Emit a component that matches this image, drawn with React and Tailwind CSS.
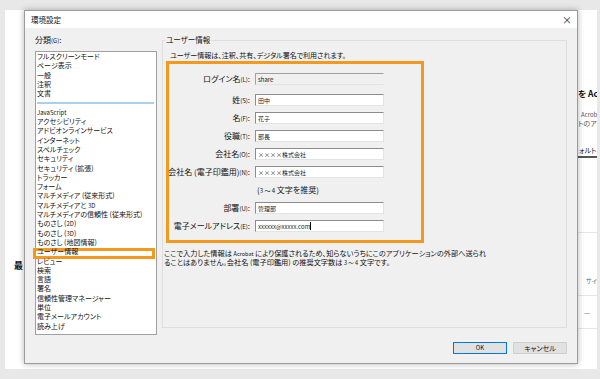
import React from "react";

const jp = "font-['Noto_Sans_CJK_JP','Noto_Sans',sans-serif] [font-feature-settings:'palt']";

const topCategories = ["フルスクリーンモード", "ページ表示", "一般", "注釈", "文書"];
const categories = [
  "JavaScript",
  "アクセシビリティ",
  "アドビオンラインサービス",
  "インターネット",
  "スペルチェック",
  "セキュリティ",
  "セキュリティ (拡張)",
  "トラッカー",
  "フォーム",
  "マルチメディア (従来形式)",
  "マルチメディアと 3D",
  "マルチメディアの信頼性 (従来形式)",
  "ものさし (2D)",
  "ものさし (3D)",
  "ものさし (地図情報)",
  "ユーザー情報",
  "レビュー",
  "検索",
  "言語",
  "署名",
  "信頼性管理マネージャー",
  "単位",
  "電子メールアカウント",
  "読み上げ",
];

const fields = [
  { label: "ログイン名", key: "L", value: "share", readOnly: true },
  { label: "姓", key: "S", value: "田中" },
  { label: "名", key: "F", value: "花子" },
  { label: "役職", key: "T", value: "部長" },
  { label: "会社名", key: "O", value: "××××株式会社" },
  { label: "会社名 (電子印鑑用)", key: "N", value: "××××株式会社", hint: true },
  { label: "部署", key: "U", value: "管理部" },
  { label: "電子メールアドレス", key: "E", value: "xxxxxx@xxxxx.com", caret: true },
];

// Latin runs render smaller than the Japanese text, like Meiryo UI does
function Latin({ text }) {
  return text.split(/([A-Za-z0-9@.]+)/).map((part, i) =>
    /^[A-Za-z0-9@.]+$/.test(part) ? (
      <span key={i} className="text-[6px]">
        {part}
      </span>
    ) : (
      part
    )
  );
}

function Field({ value, readOnly, caret }) {
  return (
    <div
      className={`w-[129px] h-[12px] border flex items-center pl-[2px] text-[6px] text-[#222] ${
        readOnly
          ? "border-t-[#a0a0a0] border-l-[#a0a0a0] border-r-transparent border-b-[#e2e2e2]"
          : "bg-white border-t-[#8c8c8c] border-l-[#8c8c8c] border-r-[#e3e3e3] border-b-[#e3e3e3]"
      }`}
    >
      <span>{value}</span>
      {caret && <span className="w-px h-[8px] bg-black" />}
    </div>
  );
}

function FormRow({ field }) {
  return (
    <div className="flex items-center h-[18px]">
      <div className="w-[81px] flex justify-end whitespace-nowrap text-[8px]">
        {field.label}
        <span className="text-[6px] self-center">({field.key})</span>:
      </div>
      <div className="ml-[5px]">
        <Field value={field.value} readOnly={field.readOnly} caret={field.caret} />
      </div>
    </div>
  );
}

export default function App() {
  return (
    <div className={`relative w-[600px] h-[379px] bg-[#e8e8e8] overflow-hidden text-[#111] ${jp}`}>
      {/* application window behind the dialog */}
      <div className="flex h-full pt-[10px] pb-[10px] pl-[5px] pr-[3px]">
        <div className="flex-1 bg-white flex">
          <div className="w-[19px] pt-[250px] pl-[9px] text-[9px] font-bold leading-[12px]">最</div>
          <div className="flex-1" />
          <div className="w-[19px] overflow-hidden flex flex-col pt-[77px] whitespace-nowrap">
            <div className="h-[12px] leading-[12px] text-[8.5px] font-bold">を Ac</div>
            <div className="mt-[12px] h-[8px] leading-[8px] text-[6px] text-[#555] pl-[3px]">Acrob</div>
            <div className="h-[8px] leading-[8px] text-[7px] text-[#555]">トのア</div>
            <div className="mt-[17px] h-[14px] border-b-2 border-[#555] flex items-center text-[7px] pl-[1px]">
              ォルト
            </div>
            <div className="h-[75px] border-b border-[#e6e6e6]" />
            <div className="h-[63px] pt-[44px] leading-[8px] text-[6px] text-[#666] pl-[8px] border-b border-[#e6e6e6]">
              サイ
            </div>
            <div className="h-[33px] pt-[12px] leading-[8px] text-[7px] text-[#666] pl-[6px] border-b border-[#e6e6e6]">
              —
            </div>
          </div>
        </div>
      </div>

      {/* preferences dialog */}
      <div className="absolute left-[24px] top-[10px] w-[554px] h-[354px] flex flex-col bg-[#f0f0f0] border border-[#9b9b9b] shadow-[0_0_6px_rgba(0,0,0,0.3)]">
        <div className="h-[17px] shrink-0 bg-white flex items-center justify-between pl-[6px] pr-[5px]">
          <span className="text-[7.5px]">環境設定</span>
          <span className="text-[10px] leading-none text-[#333]">×</span>
        </div>

        <div className="flex-1 flex flex-col pl-[10px] pr-[10px] pt-[6px]">
          <div className="flex">
            <div className="w-[122px] shrink-0 flex flex-col">
              <div className="h-[12px] leading-[12px] text-[8px]">
                分類<span className="text-[6px]">(G)</span>:
              </div>
              <div className="mt-[5px] h-[284px] bg-white border border-[#a0a0a0] text-[7px] leading-[9.3px] pl-[1px]">
                {topCategories.map((c) => (
                  <div key={c} className="h-[9.3px] whitespace-nowrap">
                    {c}
                  </div>
                ))}
                <div className="h-[9.3px] flex items-center pr-[2px]">
                  <div className="w-full h-[2px] bg-[#abd0ee]" />
                </div>
                {categories.map((c) => (
                  <div key={c} className="relative h-[9.3px] whitespace-nowrap">
                    <span className="relative z-10">
                      <Latin text={c} />
                    </span>
                    {c === "ユーザー情報" && (
                      <div className="absolute top-[1px] -bottom-[2px] -left-[4px] right-[1px] border-[3px] border-[#f39a1e]" />
                    )}
                  </div>
                ))}
              </div>
            </div>

            <fieldset className="ml-[5px] flex-1 h-[294px] border border-[#dedede]">
              <legend className="ml-[2px] px-[1px] text-[7.5px] leading-[12px]">ユーザー情報</legend>
              <div className="mt-[3px] pl-[7px] h-[12px] leading-[12px] text-[7px]">
                ユーザー情報は、注釈、共有、デジタル署名で利用されます。
              </div>
              <div className="ml-[3px] w-[258px] h-[182px] border-[3px] border-[#f39a1e] pt-[6px] flex flex-col">
                {fields.map((f, i) => (
                  <React.Fragment key={f.label}>
                    <div className={i === 0 ? "mb-[3px]" : ""}>
                      <FormRow field={f} />
                    </div>
                    {f.hint && (
                      <div className="h-[18px] flex items-center pl-[88px] text-[8px]">
                        (<span className="text-[6px]">3 ～ 4</span>&nbsp;文字を推奨)
                      </div>
                    )}
                  </React.Fragment>
                ))}
              </div>
              <div className="mt-[7px] pl-[1px] text-[7.2px] leading-[7.5px] whitespace-nowrap">
                ここで入力した情報は <span className="text-[5.5px]">Acrobat</span> により保護されるため、知らないうちにこのアプリケーションの外部へ送られ
                <br />
                ることはありません。会社名 (電子印鑑用) の推奨文字数は <span className="text-[5.5px]">3 ～ 4</span> 文字です。
              </div>
            </fieldset>
          </div>

          <div className="mt-[7px] flex justify-end">
            <button className="w-[54px] h-[12px] bg-[#e1e1e1] border border-[#0078d7] text-[6px] leading-none">
              OK
            </button>
            <button className="ml-[6px] w-[54px] h-[12px] bg-[#e1e1e1] border border-[#d0d0d0] text-[7px] leading-none">
              キャンセル
            </button>
          </div>
        </div>
      </div>
    </div>
  );
}
